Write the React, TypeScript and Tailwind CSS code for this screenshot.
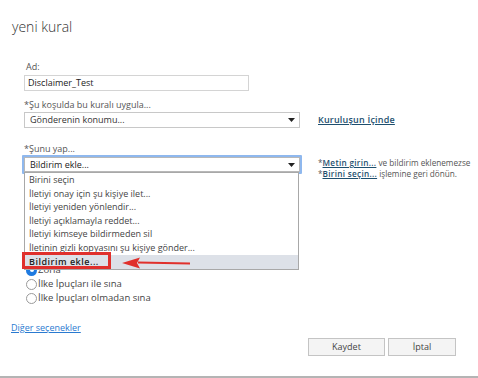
import React from 'react';

const font = { fontFamily: '"Open Sans", "Noto Sans", sans-serif' };

const actions = [
  'Birini seçin',
  'İletiyi onay için şu kişiye ilet...',
  'İletiyi yeniden yönlendir...',
  'İletiyi açıklamayla reddet...',
  'İletiyi kimseye bildirmeden sil',
  'İletinin gizli kopyasını şu kişiye gönder...',
];

const Caret = () => (
  <svg width="7" height="4" viewBox="0 0 7 4" className="shrink-0">
    <path d="M0 0h7L3.5 4z" fill="#222" />
  </svg>
);

const Radio = ({ checked, label }: { checked?: boolean; label: string }) => (
  <div className="flex items-center h-[14px] gap-[1px]">
    {checked ? (
      <span className="w-[11px] h-[11px] rounded-full bg-[#1f7ae0] flex items-center justify-center">
        <span className="w-[4px] h-[4px] rounded-full bg-white" />
      </span>
    ) : (
      <span className="w-[11px] h-[11px] rounded-full border border-[#9a9a9a] bg-white" />
    )}
    <span className="text-[9.5px] text-[#444] leading-none">{label}</span>
  </div>
);

export default function App() {
  return (
    <div
      style={font}
      className="relative w-[478px] h-[378px] overflow-hidden bg-white border-b-2 border-[#b4b4b4]"
    >
      <div className="pt-[18px] pl-[12px] text-[14px] font-light text-[#333] leading-[18px]">
        yeni kural
      </div>

      <div className="pl-[24px] pt-[25px] flex flex-col">
        <div className="pl-[2px] text-[9px] text-[#555] leading-[12px]">Ad:</div>
        <div className="mt-[2px] w-[225px] h-[16px] border border-[#d4d4d4] flex items-center pl-[3px] text-[9px] text-[#222]">
          Disclaimer_Test
        </div>

        <div className="mt-[8px] text-[9px] text-[#555] leading-[12px]">*Şu koşulda bu kuralı uygula...</div>
        <div className="mt-[1px] flex items-center">
          <div className="w-[276px] h-[16px] border border-[#c8c8c8] flex items-center justify-between pl-[5px] pr-[4px] text-[9px] text-[#333]">
            <span>Gönderenin konumu...</span>
            <Caret />
          </div>
          <a className="ml-[18px] text-[9px] font-semibold tracking-[0.2px] text-[#1e4f6e] underline">
            Kuruluşun İçinde
          </a>
        </div>

        <div className="mt-[15px] text-[9px] text-[#555] leading-[12px]">*Şunu yap...</div>
        <div className="flex items-start">
          <div className="relative -ml-[2px] w-[280px]">
            <div className="h-[19px] border-2 border-[#8fb8ee] rounded-[1px]">
              <div className="h-full border border-[#b8b8b8] flex items-center justify-between pl-[5px] pr-[4px] text-[9px] text-[#222]">
                <span>Bildirim ekle...</span>
                <Caret />
              </div>
            </div>
            {/* dropdown list */}
            <div className="absolute z-10 left-[2px] top-[17px] w-[275px] bg-white border border-[#a8a8a8] flex flex-col">
              {actions.map((a) => (
                <div key={a} className="h-[13.6px] flex items-center pl-[4px] text-[9px] text-[#444]">
                  {a}
                </div>
              ))}
              <div className="h-[14px] flex items-center pl-[4px] text-[9px] text-[#222] font-semibold tracking-[0.5px] bg-[#dde1e8]">
                Bildirim ekle...
              </div>
            </div>
          </div>
          <div className="ml-[16px] mt-[2px] text-[8.2px] leading-[11px] text-[#555]">
            <div>
              *<a className="font-semibold tracking-[0.3px] text-[#1e4f6e] underline">Metin girin...</a> ve bildirim eklenemezse
            </div>
            <div>
              *<a className="font-semibold tracking-[0.3px] text-[#1e4f6e] underline">Birini seçin...</a> işlemine geri dönün.
            </div>
          </div>
        </div>

        <div className="mt-[84px] pl-[2px] flex flex-col">
          <Radio checked label="Zorla" />
          <Radio label="İlke İpuçları ile sına" />
          <Radio label="İlke İpuçları olmadan sına" />
        </div>
      </div>

      <div className="mt-[17px] pl-[11px]">
        <a className="text-[9px] leading-[12px] text-[#2a7ad0] underline block">Diğer seçenekler</a>
      </div>

      <div className="flex justify-end gap-[3px] pr-[22px] mt-[4px]">
        <button className="w-[77px] h-[18px] border border-[#c4c4c4] bg-[#f4f4f4] text-[9px] text-[#444]">
          Kaydet
        </button>
        <button className="w-[68px] h-[18px] border border-[#c4c4c4] bg-[#f4f4f4] text-[9px] text-[#444]">
          İptal
        </button>
      </div>

      {/* annotation: red box + arrow */}
      <div className="absolute z-20 left-[22px] top-[252px] w-[89px] h-[17px] border-[3px] border-[#e0302c]" />
      <svg className="absolute z-20 left-[120px] top-[256px]" width="72" height="14" viewBox="0 0 72 14">
        <path d="M70 7.5L18 6.5" stroke="#e0302c" strokeWidth="2" fill="none" />
        <path d="M2 7L20 1.5L17 7L20 12.5z" fill="#e0302c" />
      </svg>
    </div>
  );
}
